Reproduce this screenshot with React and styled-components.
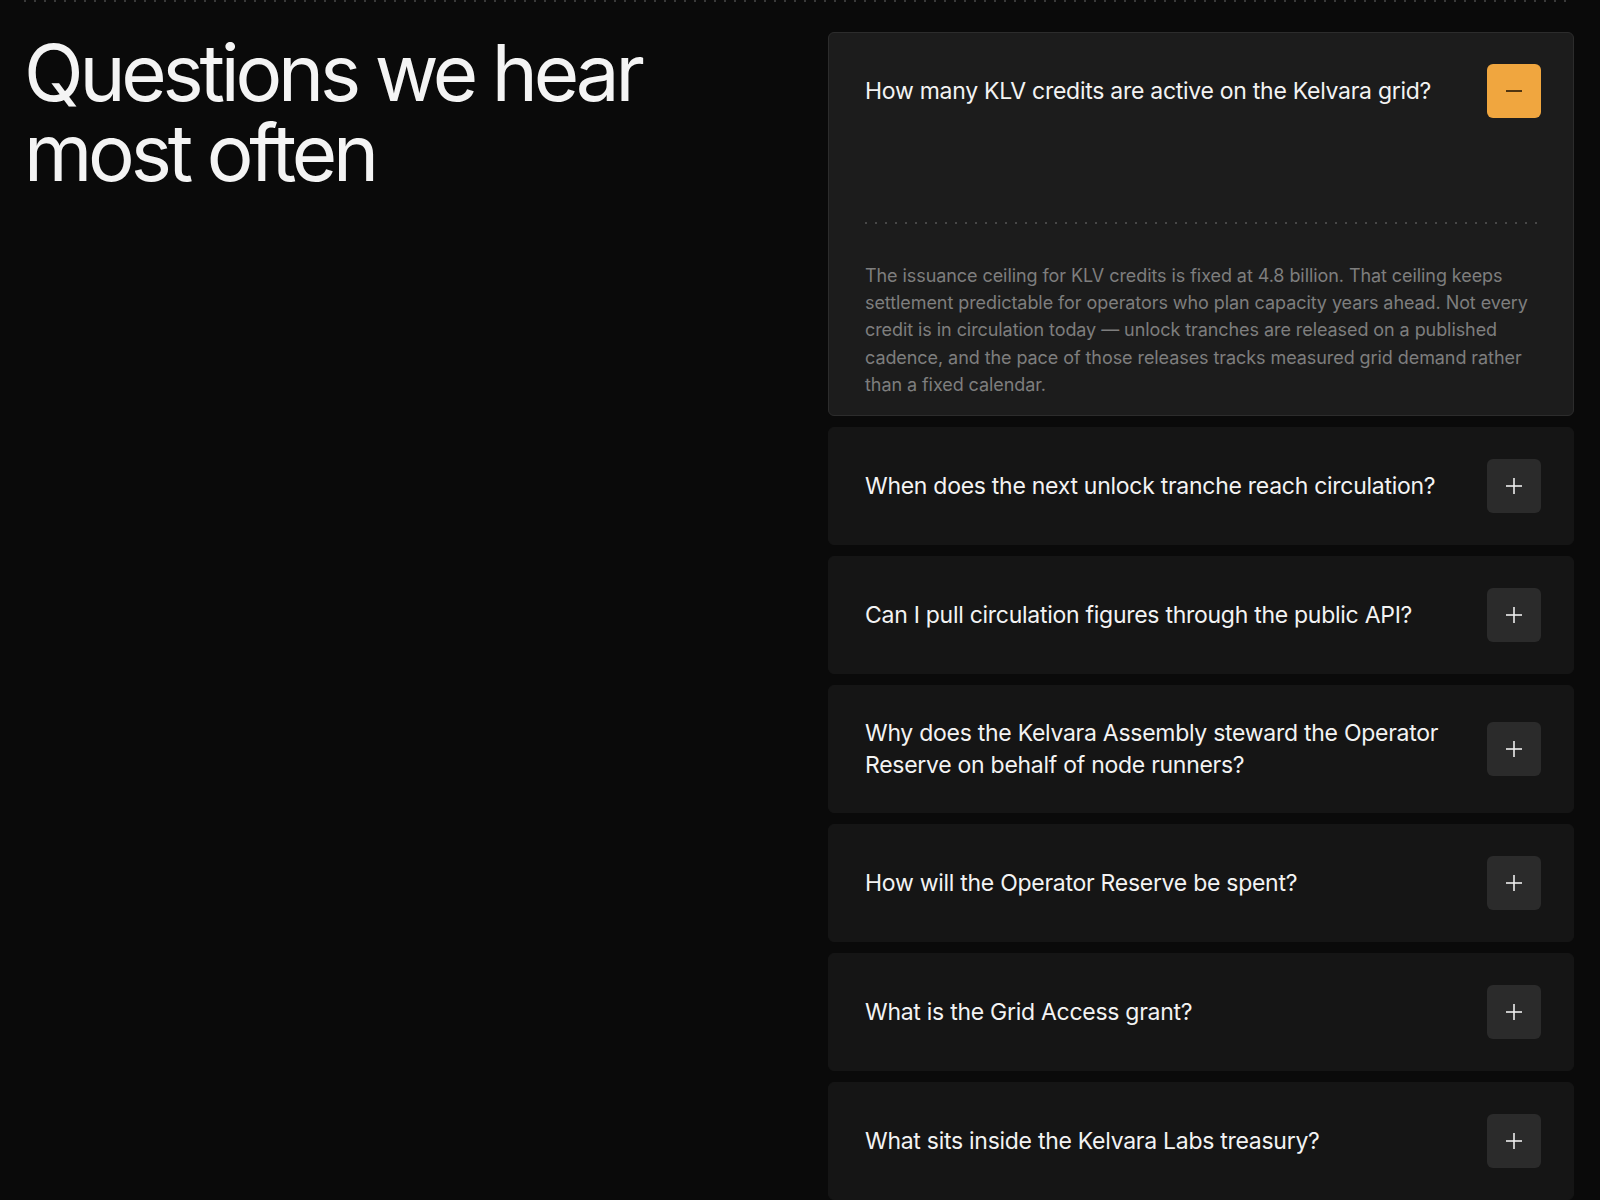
import React, { useState } from "react";
import styled, { createGlobalStyle } from "styled-components";

const Global = createGlobalStyle`
  html, body { margin: 0; padding: 0; background: #0a0a0a; }
  body { font-family: Inter, "Noto Sans", sans-serif; color: #f2f2f2; -webkit-font-smoothing: antialiased; }
  * { box-sizing: border-box; }
`;

const Page = styled.div`
  padding: 0 26px 0 24px;
  min-height: 1200px;
`;

const Section = styled.section`
  position: relative;
  display: grid;
  grid-template-columns: 1fr 746px;
  gap: 56px;
  padding-top: 32px;
  background-image: linear-gradient(to right, #3a3a3a 2px, transparent 2px);
  background-size: 10px 2px;
  background-repeat: repeat-x;
  background-position: 0 0;
`;

const Title = styled.h2`
  margin: 0;
  font-size: 78px;
  line-height: 80px;
  font-weight: 400;
  letter-spacing: -0.054em;
  color: #f4f4f4;
  padding-top: 1px;
`;

const List = styled.div`
  display: flex;
  flex-direction: column;
  gap: 11px;
`;

const Card = styled.div`
  background: ${(p) => (p.$open ? "#1c1c1c" : "#151515")};
  border: 1px solid ${(p) => (p.$open ? "#2c2c2c" : "#151515")};
  border-radius: 6px;
  padding: 0 32px 0 36px;
`;

const Header = styled.button`
  all: unset;
  cursor: pointer;
  display: flex;
  align-items: center;
  justify-content: space-between;
  gap: 24px;
  width: 100%;
  padding: 31px 0;
`;

const Question = styled.span`
  font-size: 23px;
  line-height: 32px;
  letter-spacing: -0.012em;
  color: #f3f3f3;
  max-width: 590px;
`;

const Toggle = styled.span`
  flex: 0 0 54px;
  width: 54px;
  height: 54px;
  border-radius: 6px;
  display: flex;
  align-items: center;
  justify-content: center;
  background: ${(p) => (p.$open ? "#f0a63f" : "#2b2b2b")};
  color: ${(p) => (p.$open ? "#2a1a05" : "#eeeeee")};
`;

const Panel = styled.div`
  padding: 73px 0 17px;
`;

const Divider = styled.div`
  height: 2px;
  width: 673px;
  background-image: linear-gradient(to right, #474747 2px, transparent 2px);
  background-size: 10px 2px;
  background-repeat: repeat-x;
  margin-bottom: 38px;
`;

const Answer = styled.p`
  margin: 0;
  font-size: 18px;
  line-height: 27.2px;
  color: #7e7e7e;
  letter-spacing: -0.004em;
  max-width: 674px;
`;

const Icon = ({ open }) => (
  <svg width="20" height="20" viewBox="0 0 20 20" fill="none" stroke="currentColor" strokeWidth="1.6">
    <line x1="2" y1="10" x2="18" y2="10" />
    {!open && <line x1="10" y1="2" x2="10" y2="18" />}
  </svg>
);

const faqs = [
  {
    q: "How many KLV credits are active on the Kelvara grid?",
    a: "The issuance ceiling for KLV credits is fixed at 4.8 billion. That ceiling keeps settlement predictable for operators who plan capacity years ahead. Not every credit is in circulation today — unlock tranches are released on a published cadence, and the pace of those releases tracks measured grid demand rather than a fixed calendar.",
  },
  { q: "When does the next unlock tranche reach circulation?", a: "" },
  { q: "Can I pull circulation figures through the public API?", a: "" },
  { q: "Why does the Kelvara Assembly steward the Operator Reserve on behalf of node runners?", a: "" },
  { q: "How will the Operator Reserve be spent?", a: "" },
  { q: "What is the Grid Access grant?", a: "" },
  { q: "What sits inside the Kelvara Labs treasury?", a: "" },
];

export default function App() {
  const [open, setOpen] = useState(0);
  return (
    <>
      <Global />
      <Page>
        <Section>
          <Title>
            Questions we hear
            <br />
            most often
          </Title>
          <List>
            {faqs.map((f, i) => {
              const isOpen = open === i;
              return (
                <Card key={i} $open={isOpen}>
                  <Header onClick={() => setOpen(isOpen ? -1 : i)}>
                    <Question>{f.q}</Question>
                    <Toggle $open={isOpen}>
                      <Icon open={isOpen} />
                    </Toggle>
                  </Header>
                  {isOpen && (
                    <Panel>
                      <Divider />
                      <Answer>{f.a}</Answer>
                    </Panel>
                  )}
                </Card>
              );
            })}
          </List>
        </Section>
      </Page>
    </>
  );
}
